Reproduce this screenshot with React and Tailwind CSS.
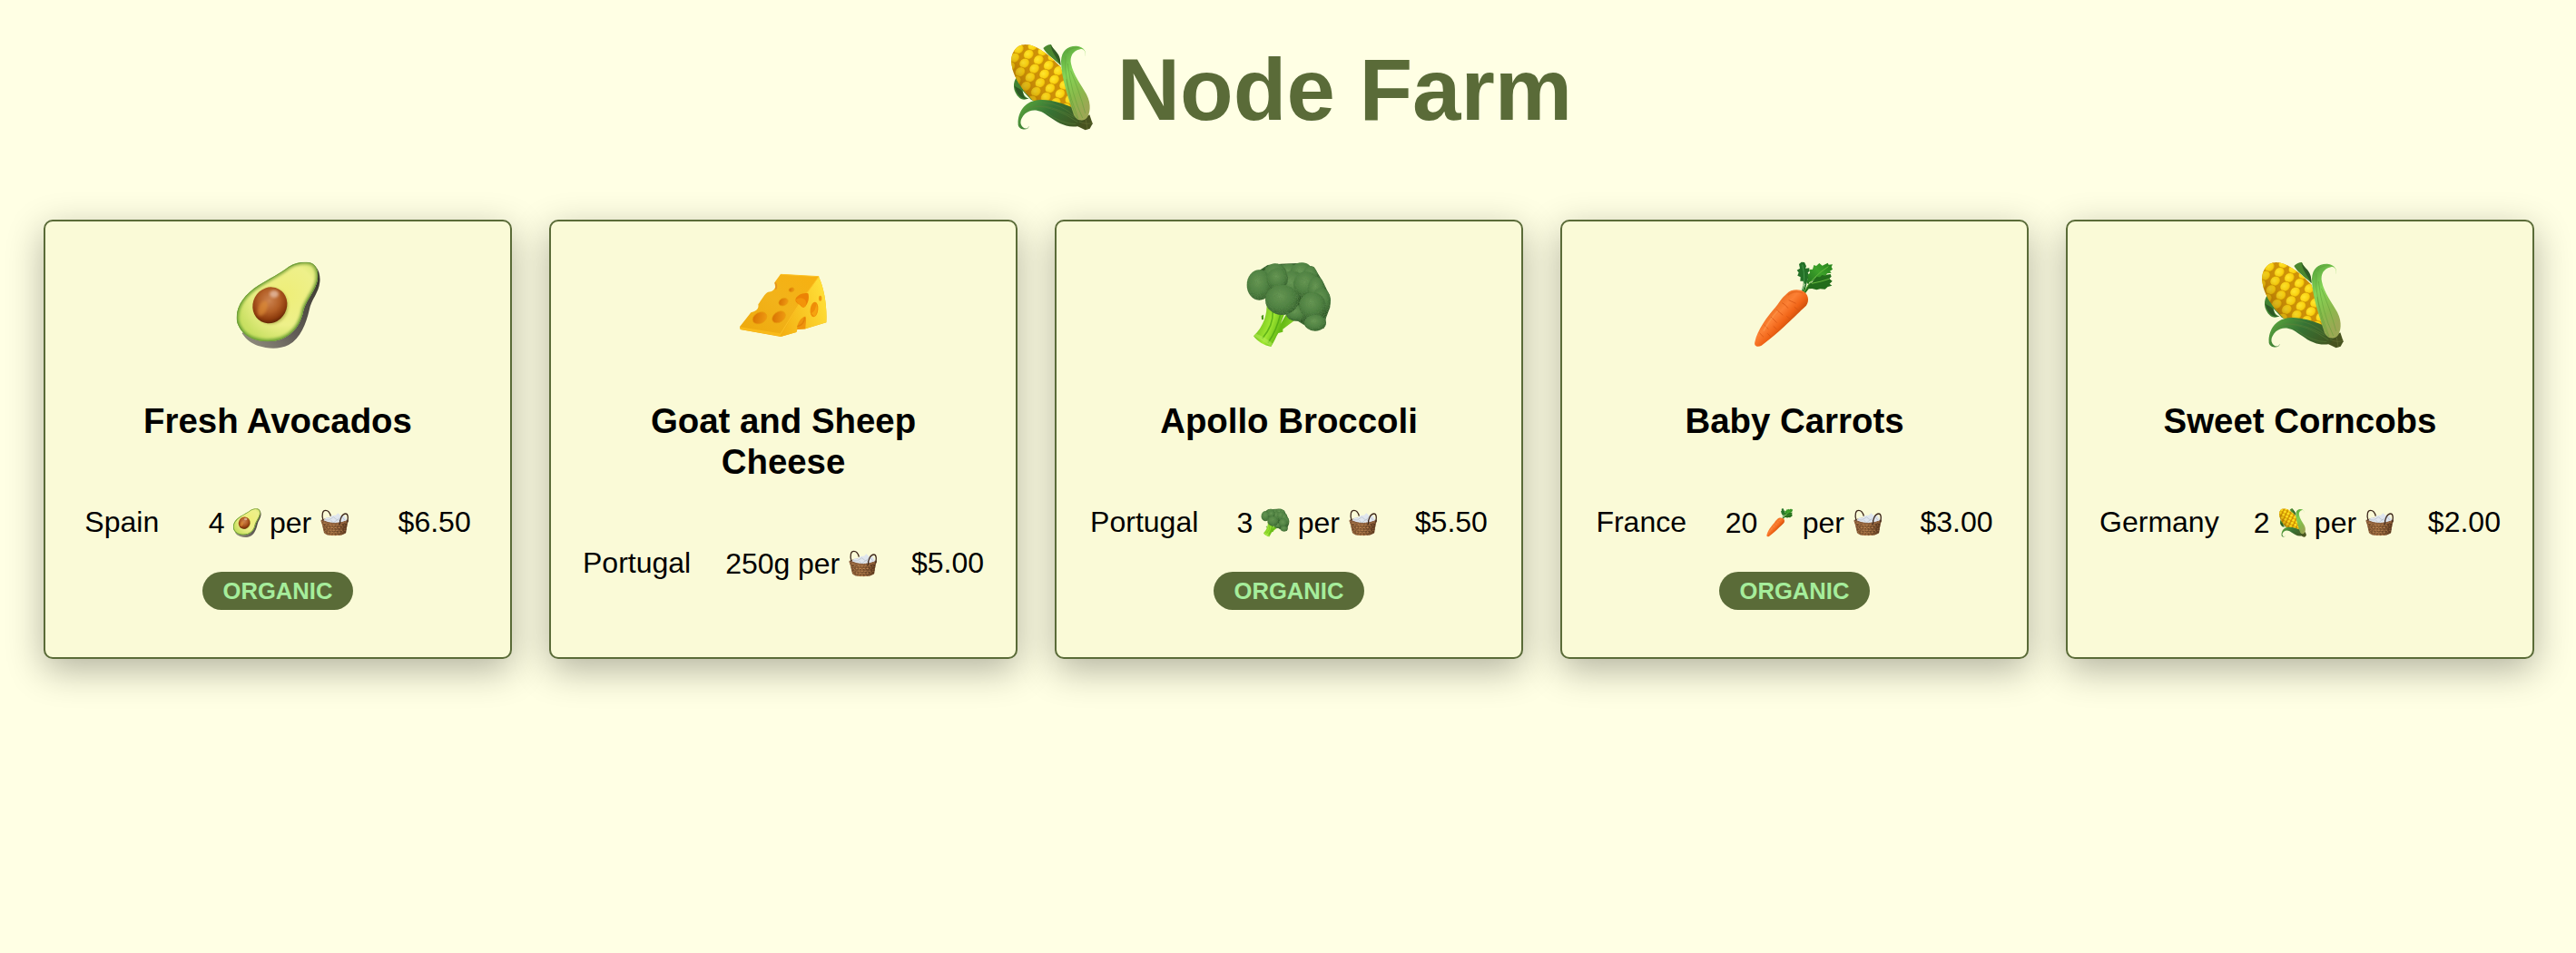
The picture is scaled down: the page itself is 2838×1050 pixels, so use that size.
import React from "react";

const range = (n) => Array.from({ length: n }, (_, i) => i);

function Avocado({ className }) {
  return (
    <svg viewBox="54 54 288 288" className={className} aria-hidden="true">
      <defs>
        <linearGradient id="avSkin" x1="0.2" y1="1" x2="1" y2="0.2">
          <stop offset="0" stopColor="#8a8678" />
          <stop offset="0.4" stopColor="#625d57" />
          <stop offset="1" stopColor="#3c3a30" />
        </linearGradient>
        <linearGradient id="avEdge" x1="1" y1="0" x2="0" y2="1">
          <stop offset="0" stopColor="#8fae47" />
          <stop offset="1" stopColor="#6fa733" />
        </linearGradient>
        <radialGradient id="avFlesh" gradientUnits="userSpaceOnUse" cx="225" cy="165" r="165">
          <stop offset="0" stopColor="#eeee78" />
          <stop offset="0.6" stopColor="#eef08a" />
          <stop offset="1" stopColor="#c9e063" />
        </radialGradient>
        <radialGradient id="avPit" cx="0.42" cy="0.4" r="0.62">
          <stop offset="0" stopColor="#cc8350" />
          <stop offset="0.5" stopColor="#b35f26" />
          <stop offset="0.82" stopColor="#8f3d0e" />
          <stop offset="1" stopColor="#642605" />
        </radialGradient>
        <filter id="avSoft" x="-20%" y="-20%" width="140%" height="140%"><feGaussianBlur stdDeviation="5" /></filter>
        <clipPath id="avClip"><path d="M62 240C62 198 92 160 135 133C170 111 202 96 235 71C258 57 290 52 310 60C328 68 333 92 330 112C325 148 297 175 284 212C276 258 252 294 210 311C160 328 105 315 80 285C67 268 62 255 62 240Z" /></clipPath>
      </defs>
      <path d="M300 58C322 60 341 88 337 122C333 160 309 178 302 215C292 258 274 308 234 330C203 345 166 343 133 333C112 326 95 314 80 292Z" fill="url(#avSkin)" />
      <g clipPath="url(#avClip)">
        <rect x="54" y="54" width="288" height="288" fill="url(#avFlesh)" />
        <path d="M62 240C62 198 92 160 135 133C170 111 202 96 235 71C258 57 290 52 310 60C328 68 333 92 330 112C325 148 297 175 284 212C276 258 252 294 210 311C160 328 105 315 80 285C67 268 62 255 62 240Z" fill="none" stroke="url(#avEdge)" strokeWidth="15" filter="url(#avSoft)" />
        <path d="M62 240C62 198 92 160 135 133C170 111 202 96 235 71C258 57 290 52 310 60C328 68 333 92 330 112C325 148 297 175 284 212C276 258 252 294 210 311C160 328 105 315 80 285C67 268 62 255 62 240Z" fill="none" stroke="#6c9d3c" strokeWidth="5" />
      </g>
      <ellipse cx="176" cy="201" rx="56" ry="60" fill="#858425" opacity="0.5" filter="url(#avSoft)" />
      <ellipse cx="172" cy="199" rx="56" ry="61" transform="rotate(28 172 199)" fill="url(#avPit)" />
      <ellipse cx="148" cy="209" rx="14" ry="27" transform="rotate(24 148 209)" fill="#e39238" opacity="0.6" filter="url(#avSoft)" />
      <ellipse cx="186" cy="162" rx="15" ry="12" fill="#e6bea6" opacity="0.8" filter="url(#avSoft)" />
    </svg>
  );
}

function Cheese({ className }) {
  const holes = [
    [111, 241, 25, 18, -28],
    [174, 238, 24, 17, -35],
    [189, 188, 16, 12, -25],
    [216, 148, 9, 7, -20],
  ];
  return (
    <svg viewBox="45 54 288 288" className={className} aria-hidden="true">
      <defs>
        <linearGradient id="chTop" x1="0" y1="1" x2="1" y2="0">
          <stop offset="0" stopColor="#eda80c" />
          <stop offset="0.5" stopColor="#f2b31a" />
          <stop offset="1" stopColor="#f7b00f" />
        </linearGradient>
        <linearGradient id="chSide" x1="0" y1="0.8" x2="1" y2="0.3">
          <stop offset="0" stopColor="#f4b113" />
          <stop offset="1" stopColor="#ffe038" />
        </linearGradient>
        <linearGradient id="chHole" x1="0" y1="0" x2="1" y2="0.6">
          <stop offset="0" stopColor="#d56c00" />
          <stop offset="1" stopColor="#ee9911" />
        </linearGradient>
      </defs>
      <path d="M180 96L306 104C325 145 334 205 331 256L262 277L235 279L232 288L180 303L47 279L45 270L82 223C98 219 109 212 106 196C117 181 128 159 139 155C151 155 164 145 162 136L160 124Z" fill="url(#chTop)" />
      <path d="M306 104C325 145 334 205 331 256L262 277L235 279L232 288L180 303L241 196Z" fill="url(#chSide)" />
      <path d="M47 271L178 292L182 302L47 279Z" fill="#f9ba1a" />
      <path d="M181 97L306 104L241 195L178 297" fill="none" stroke="#fdc224" strokeWidth="3" strokeLinejoin="round" />
      <path d="M162 124Q170 137 163 146" stroke="#e49320" strokeWidth="5" fill="none" />
      {holes.map(([cx, cy, rx, ry, r]) => (
        <ellipse key={cx} cx={cx} cy={cy} rx={rx} ry={ry} transform={`rotate(${r} ${cx} ${cy})`} fill="url(#chHole)" stroke="#e89c0e" strokeWidth="2" />
      ))}
      <path d="M230 177C235 166 254 156 271 160C276 173 271 199 257 206C247 207 247 199 241 196C236 193 226 187 230 177Z" fill="#ec8205" />
      <path d="M230 181Q246 169 260 180Q267 187 262 204Q250 208 246 197L238 194Z" fill="#f69b0b" opacity="0.7" />
      <ellipse cx="291" cy="213" rx="13" ry="25" transform="rotate(7 291 213)" fill="#ef8d08" />
      <path d="M281 225Q295 220 298 194Q307 217 292 236Z" fill="#f9ad12" opacity="0.7" />
      <ellipse cx="311" cy="176" rx="5" ry="9" fill="#ee9910" />
      <path d="M235 279C232 256 253 235 262 236C267 244 262 261 262 277Z" fill="#ef930d" />
      <path d="M235 269Q257 265 260 239" stroke="#d87405" strokeWidth="4" fill="none" opacity="0.6" />
    </svg>
  );
}

function Broccoli({ className }) {
  const lobes = [
    [210, 94, 40, 32], [165, 97, 38, 36], [252, 92, 38, 34], [280, 104, 26, 34],
    [221, 132, 46, 46], [112, 132, 41, 50], [172, 112, 35, 36], [267, 130, 42, 42],
    [300, 145, 28, 40], [235, 225, 35, 26], [316, 184, 32, 42], [288, 200, 44, 44],
    [297, 257, 36, 27], [187, 181, 55, 50],
  ];
  return (
    <svg viewBox="66 54 288 288" className={className} aria-hidden="true">
      <defs>
        <linearGradient id="brStem" x1="0" y1="0.2" x2="1" y2="0.6">
          <stop offset="0" stopColor="#5caa13" />
          <stop offset="0.45" stopColor="#a0e832" />
          <stop offset="0.7" stopColor="#64b914" />
          <stop offset="1" stopColor="#92d930" />
        </linearGradient>
        <radialGradient id="brLobe" cx="0.44" cy="0.38" r="0.64">
          <stop offset="0" stopColor="#6a9a56" />
          <stop offset="0.6" stopColor="#4e8141" />
          <stop offset="1" stopColor="#335e2b" />
        </radialGradient>
        <filter id="brGrain" x="0" y="0" width="100%" height="100%">
          <feTurbulence type="fractalNoise" baseFrequency="0.4" numOctaves="2" seed="4" result="n" />
          <feColorMatrix in="n" values="0 0 0 0 0.1  0 0 0 0 0.24  0 0 0 0 0.07  1.7 0 0 0 -0.62" result="g" />
          <feComposite in="g" in2="SourceGraphic" operator="in" result="t" />
          <feMerge><feMergeNode in="SourceGraphic" /><feMergeNode in="t" /></feMerge>
        </filter>
      </defs>
      <path d="M136 190C140 228 126 270 93 301C107 320 128 332 151 336C162 319 167 304 175 291L190 287L190 278C203 268 216 258 229 249L202 227L182 261L199 220L180 195Z" fill="url(#brStem)" />
      <path d="M126 230L119 234L120 247L126 246Z" fill="#4b941c" />
      <path d="M157 220Q158 268 122 309M182 229Q169 283 141 323" stroke="#49a00f" strokeWidth="5" fill="none" opacity="0.7" />
      <path d="M93 301Q112 309 151 336L155 325Q130 303 102 293Z" fill="#b5ec56" opacity="0.55" />
      <g filter="url(#brGrain)">
        <path d="M112 84L140 66L185 62L240 60L292 72L322 120L344 165L346 205L333 240L326 275L270 270L230 245L200 225L150 180L95 165Z" fill="#2f5928" />
        {lobes.map(([cx, cy, rx, ry], i) => (
          <ellipse key={i} cx={cx} cy={cy} rx={rx} ry={ry} fill="url(#brLobe)" />
        ))}
      </g>
    </svg>
  );
}

function Carrot({ className }) {
  return (
    <svg viewBox="57 54 288 288" className={className} aria-hidden="true">
      <defs>
        <linearGradient id="caBody" gradientUnits="userSpaceOnUse" x1="130" y1="205" x2="190" y2="260">
          <stop offset="0" stopColor="#ee7224" />
          <stop offset="0.35" stopColor="#fc8034" />
          <stop offset="0.7" stopColor="#f06316" />
          <stop offset="1" stopColor="#c94d0a" />
        </linearGradient>
        <linearGradient id="caLeaf" x1="0" y1="1" x2="1" y2="0">
          <stop offset="0" stopColor="#19651b" />
          <stop offset="0.6" stopColor="#3da22a" />
          <stop offset="1" stopColor="#258019" />
        </linearGradient>
      </defs>
      <path d="M226 156L236 130L229 119L220 119L221 106L211 101L215 91L209 83L219 77L216 63L224 56L234 57L240 70L237 77L250 76L250 87L245 91L249 100L243 119L234 158Z" fill="#237027" />
      <path d="M225 154Q240 114 227 65" stroke="#429647" strokeWidth="3" fill="none" />
      <path d="M231 158L248 129L259 123L274 103L294 96L307 98L320 96L323 104L316 111L326 119L317 128L325 134L311 138L302 146L286 145L274 148L259 144L248 145L235 162Z" fill="#236d1b" />
      <path d="M235 152L248 132L241 123L246 109L244 100L252 92L250 81L261 80L265 66L273 69L283 60L293 68L311 59L314 65L327 64L323 72L327 80L318 86L323 92L309 94L304 101L292 99L285 106L273 105L263 118L251 122Z" fill="url(#caLeaf)" />
      <path d="M229 159Q260 104 313 71M258 127Q290 121 315 112" stroke="#66b83e" strokeWidth="3" fill="none" />
      <path d="M175 161C188 145 219 144 234 155C250 168 250 192 235 205C207 230 155 286 92 332C79 339 66 334 70 320C78 282 112 234 137 207C149 193 157 176 175 161Z" fill="url(#caBody)" />
      <path d="M179 166Q200 147 229 159" stroke="#e05f18" strokeWidth="4" fill="none" opacity="0.6" />
      <path d="M160 191Q174 199 180 209M200 204L217 218M142 214L163 232M175 235L188 246M123 237L143 257M101 264L115 278M131 268L143 279M86 291L99 304M112 292L123 304M182 182L206 193" stroke="#d55312" strokeWidth="3" fill="none" opacity="0.75" />
      <path d="M146 217Q117 249 99 284" stroke="#ffae63" strokeWidth="5" fill="none" opacity="0.35" />
    </svg>
  );
}

function Corn({ className }) {
  const kernels = range(18).flatMap((i) =>
    range(14).map((j) => [20 + (i - 3) * 33 - (j - 2) * 14, 20 + (i - 3) * 18 + (j - 2) * 29 - 60])
  ).filter(([x, y]) => x > 50 && x < 285 && y > 45 && y < 290);
  return (
    <svg viewBox="48 54 288 288" className={className} aria-hidden="true">
      <defs>
        <radialGradient id="coKernel" cx="0.42" cy="0.38" r="0.65">
          <stop offset="0" stopColor="#ffe730" />
          <stop offset="0.7" stopColor="#fbd20f" />
          <stop offset="1" stopColor="#dda608" />
        </radialGradient>
        <linearGradient id="coShade" gradientUnits="userSpaceOnUse" x1="90" y1="200" x2="170" y2="145">
          <stop offset="0" stopColor="#855200" stopOpacity="0.5" />
          <stop offset="0.6" stopColor="#a06800" stopOpacity="0.1" />
          <stop offset="1" stopColor="#a06800" stopOpacity="0" />
        </linearGradient>
        <linearGradient id="coLeafR" x1="0" y1="0" x2="0.4" y2="1">
          <stop offset="0" stopColor="#4e9b36" />
          <stop offset="0.4" stopColor="#86d657" />
          <stop offset="0.75" stopColor="#8bb94b" />
          <stop offset="1" stopColor="#9ba854" />
        </linearGradient>
        <linearGradient id="coLeafB" x1="0" y1="0.4" x2="1" y2="0.8">
          <stop offset="0" stopColor="#559f3b" />
          <stop offset="0.4" stopColor="#367334" />
          <stop offset="1" stopColor="#42511e" />
        </linearGradient>
        <clipPath id="coClip"><path d="M68 126C61 95 77 57 113 57C151 57 197 96 230 132C242 174 254 222 268 266C230 254 180 239 146 248C113 221 74 170 68 126Z" /></clipPath>
      </defs>
      <path d="M172 69C181 60 192 56 198 57C204 75 227 88 231 127C211 108 184 91 172 69Z" fill="#4a872f" />
      <path d="M197 57C204 76 234 87 228 125C220 103 199 85 197 57Z" fill="#315b25" />
      <path d="M86 163C70 181 70 213 94 234C104 242 116 239 124 235C112 232 107 224 104 210L132 240L152 248L122 204Z" fill="#408332" />
      <path d="M76 190C79 204 105 198 107 225C110 235 117 235 124 235C110 242 85 232 76 190Z" fill="#2c5924" />
      <g clipPath="url(#coClip)">
        <rect x="54" y="54" width="230" height="230" fill="#cf9108" />
        {kernels.map(([x, y], i) => (
          <ellipse key={i} cx={x} cy={y} rx="18" ry="15.5" transform={`rotate(-35 ${x} ${y})`} fill="url(#coKernel)" stroke="#c58b06" strokeWidth="1.5" />
        ))}
        <rect x="54" y="54" width="230" height="230" fill="url(#coShade)" />
      </g>
      <path d="M300 304L325 289L335 319L326 335L311 340L286 328Z" fill="#48531f" />
      <path d="M124 326C128 340 94 343 89 323C87 287 105 247 153 241C190 235 241 253 270 266C274 290 291 312 310 307L289 327C247 335 219 314 190 295C158 269 132 270 112 286C98 301 91 317 105 331C113 338 123 335 124 326Z" fill="url(#coLeafB)" />
      <path d="M112 275Q165 238 274 298M145 261Q211 261 286 314M173 249Q232 252 279 298M180 281Q232 320 280 320" stroke="#5d823b" strokeWidth="2.5" fill="none" opacity="0.6" />
      <path d="M309 98C317 84 305 68 294 73C270 77 259 98 264 121C271 157 299 193 315 222C333 256 326 288 316 300C302 313 283 310 273 290C258 241 231 169 231 111C233 76 254 61 282 62C306 64 319 83 309 98Z" fill="url(#coLeafR)" />
      <path d="M246 95Q237 174 288 302M253 120Q264 219 302 300M251 86Q250 69 292 67M262 143Q288 201 311 284M249 172Q261 258 285 303" stroke="#5f9d36" strokeWidth="2.5" fill="none" opacity="0.6" />
      <path d="M291 312Q317 324 335 315M313 306L318 337" stroke="#677135" strokeWidth="3" fill="none" opacity="0.6" />
    </svg>
  );
}

function Basket({ className }) {
  return (
    <svg viewBox="396 59 96 96" className={className} aria-hidden="true">
      <defs>
        <linearGradient id="baBody" x1="0" y1="0" x2="1" y2="0">
          <stop offset="0" stopColor="#6a4529" />
          <stop offset="0.4" stopColor="#94653c" />
          <stop offset="1" stopColor="#51311a" />
        </linearGradient>
        <clipPath id="baClip"><path d="M402 102Q446 120 490 102L483 141Q472 150 446 150Q419 150 411 140Z" /></clipPath>
      </defs>
      <path d="M401 98Q442 78 491 98L489 109Q445 123 404 109Z" fill="#80583a" />
      <path d="M409 99L419 89L429 90L438 83L450 82L457 75L465 82L478 83L487 99Q447 118 409 99Z" fill="#e0e6ee" />
      <path d="M414 97L427 98L442 88L455 98L469 85L480 99M433 98L442 107L456 96L466 103" stroke="#b4bec9" strokeWidth="2" fill="none" />
      <g clipPath="url(#baClip)">
        <rect x="399" y="96" width="94" height="60" fill="url(#baBody)" />
        {range(6).map((j) => range(9).map((i) => (
          <path key={`${i}-${j}`} d={`M${397 + i * 12 + (j % 2) * 6} ${109 + j * 8}q6 -5 10 2`} stroke={i > 5 ? "#946339" : "#c28a55"} strokeWidth="3" fill="none" />
        )))}
        {range(5).map((j) => (
          <path key={j} d={`M401 ${112 + j * 8}Q446 ${126 + j * 8} 491 ${112 + j * 8}`} stroke="#4a2c17" strokeWidth="1.8" strokeDasharray="5 4" fill="none" />
        ))}
      </g>
      <path d="M401 101Q445 119 491 101" fill="none" stroke="#9b6b44" strokeWidth="5" />
      <path d="M401 99Q445 117 491 99" fill="none" stroke="#5b3b25" strokeWidth="1.5" strokeDasharray="4 3" />
      <path d="M408 99C402 77 407 66 416 66C427 66 431 76 433 85" fill="none" stroke="#3f2a1e" strokeWidth="4" />
      <path d="M463 112C463 91 472 77 482 77C491 77 491 91 488 105" fill="none" stroke="#3f2a1e" strokeWidth="4" />
    </svg>
  );
}

const products = [
  { name: "Fresh Avocados", Icon: Avocado, from: "Spain", quantity: "4", price: "$6.50", organic: true },
  { name: "Goat and Sheep Cheese", Icon: Cheese, from: "Portugal", quantity: "250g", price: "$5.00", weighed: true },
  { name: "Apollo Broccoli", Icon: Broccoli, from: "Portugal", quantity: "3", price: "$5.50", organic: true },
  { name: "Baby Carrots", Icon: Carrot, from: "France", quantity: "20", price: "$3.00", organic: true },
  { name: "Sweet Corncobs", Icon: Corn, from: "Germany", quantity: "2", price: "$2.00" },
];

function Card({ name, Icon, from, quantity, price, organic, weighed }) {
  return (
    <article className="flex h-[484px] flex-col items-center rounded-[10px] border-2 border-[#5a6b38] bg-[#fafad7] px-4 pt-11 shadow-[0_12px_40px_rgba(0,0,0,0.3)]">
      <Icon className="size-24 shrink-0" />
      <h2 className="mt-[57px] px-16 text-center text-[38.4px] leading-[45px] font-bold">{name}</h2>
      <div className="mt-[71px] flex h-[37px] w-full justify-around text-[32px] leading-[37px] whitespace-nowrap">
        <p>{from}</p>
        <p className="flex gap-[8.7px] pt-px">
          <span>{quantity}</span>
          {!weighed && <Icon className="mt-0.5 size-8" />}
          <span>per</span>
          <Basket className="mt-0.5 size-8" />
        </p>
        <p>{price}</p>
      </div>
      {organic && (
        <span className="mt-9 h-[42px] rounded-full bg-[#5a6b38] px-[22.5px] text-[25.6px] leading-[42px] font-bold text-[#a5ed9b]">
          ORGANIC
        </span>
      )}
    </article>
  );
}

export default function App() {
  return (
    <div className="min-h-screen bg-[#ffffe4] font-['Liberation_Sans',Arial,sans-serif] text-black">
      <h1 className="flex h-[242px] justify-center gap-[27px] pt-12 pl-0.5 text-[96px] leading-[96px] font-bold text-[#5a6b38]">
        <Corn className="size-24" />
        <span className="pt-[3px]">Node Farm</span>
      </h1>
      <main className="grid grid-cols-5 gap-[41px] pr-[46px] pl-12">
        {products.map((p) => <Card key={p.name} {...p} />)}
      </main>
    </div>
  );
}
